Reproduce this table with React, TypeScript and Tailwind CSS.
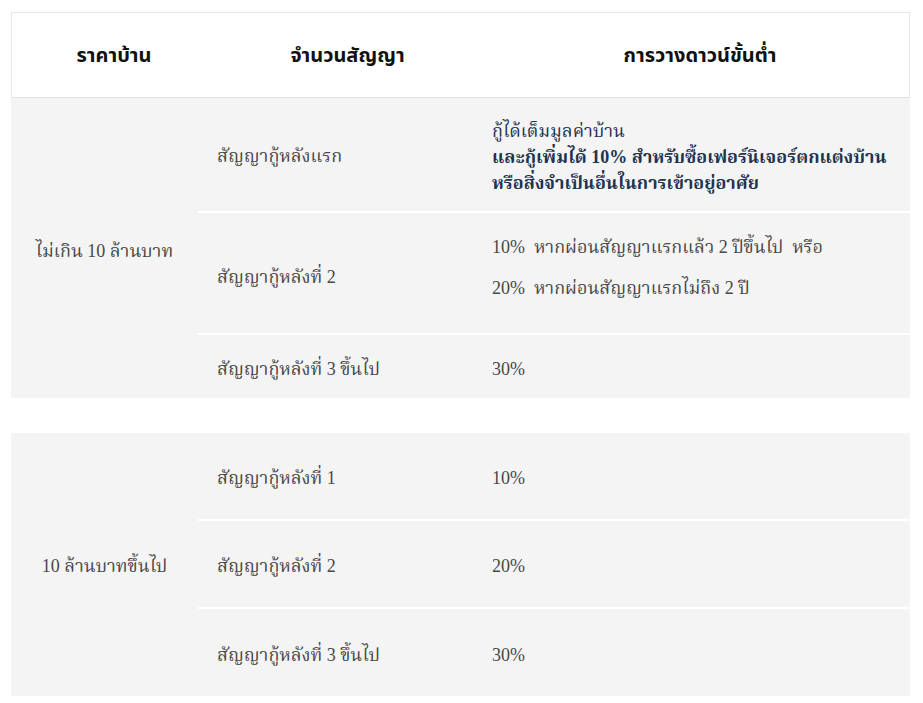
import React from "react";

const serif = { fontFamily: '"Liberation Serif", "Noto Serif Thai", "Noto Sans Thai Looped", "Noto Sans Thai", serif' };

function Row({ h, left, right, last }: { h: string; left: React.ReactNode; right: React.ReactNode; last?: boolean }) {
  return (
    <div className={`flex ${h} ${last ? "" : "border-b-2 border-white"}`}>
      <div className="w-[280px] flex items-center pl-[19px] pt-[5px]">{left}</div>
      <div className="flex-1 flex items-center pl-[14px] pt-[5px]">{right}</div>
    </div>
  );
}

export default function App() {
  return (
    <div className="bg-white w-[923px] h-[703px] pt-[12px] pl-[11px] text-[18px]" style={serif}>
      <div className="w-[899px]">
        {/* header */}
        <div className="flex h-[86px] border border-[#e6e6e6] border-b-[#e2e2e2] bg-white font-bold text-[20px] text-[#111]" style={{ fontFamily: '"Noto Sans", "Noto Sans Thai", "DejaVu Sans", sans-serif' }}>
          <div className="w-[204px] flex items-center justify-center">ราคาบ้าน</div>
          <div className="w-[263px] flex items-center justify-center">จำนวนสัญญา</div>
          <div className="flex-1 flex items-center justify-center pl-[12px]">การวางดาวน์ขั้นต่ำ</div>
        </div>

        {/* group 1 */}
        <div className="flex bg-[#f4f4f4] text-[#484848]">
          <div className="w-[187px] flex items-center justify-center pt-[6px]">ไม่เกิน 10 ล้านบาท</div>
          <div className="flex-1 flex flex-col">
            <Row
              h="h-[115px]"
              left={<span className="-mt-[1px]">สัญญากู้หลังแรก</span>}
              right={
                <div className="leading-[26px] text-[#22324f] mt-[-1px]">
                  <div>กู้ได้เต็มมูลค่าบ้าน</div>
                  <div className="font-bold">และกู้เพิ่มได้ 10% สำหรับซื้อเฟอร์นิเจอร์ตกแต่งบ้าน</div>
                  <div className="font-bold">หรือสิ่งจำเป็นอื่นในการเข้าอยู่อาศัย</div>
                </div>
              }
            />
            <Row
              h="h-[122px]"
              left={<span className="mt-[3px]">สัญญากู้หลังที่ 2</span>}
              right={
                <div className="-mt-[16px]">
                  <div className="mb-[14px]">10%&nbsp; หากผ่อนสัญญาแรกแล้ว 2 ปีขึ้นไป&nbsp; หรือ</div>
                  <div>20%&nbsp; หากผ่อนสัญญาแรกไม่ถึง 2 ปี</div>
                </div>
              }
            />
            <Row h="h-[63px]" last left={<span>สัญญากู้หลังที่ 3 ขึ้นไป</span>} right={<span>30%</span>} />
          </div>
        </div>

        {/* group 2 */}
        <div className="flex bg-[#f4f4f4] text-[#484848] mt-[35px]">
          <div className="w-[187px] flex items-center justify-center pt-[4px]">10 ล้านบาทขึ้นไป</div>
          <div className="flex-1 flex flex-col">
            <Row h="h-[88px]" left={<span>สัญญากู้หลังที่ 1</span>} right={<span>10%</span>} />
            <Row h="h-[88px]" left={<span>สัญญากู้หลังที่ 2</span>} right={<span>20%</span>} />
            <Row h="h-[87px]" last left={<span>สัญญากู้หลังที่ 3 ขึ้นไป</span>} right={<span>30%</span>} />
          </div>
        </div>
      </div>
    </div>
  );
}
